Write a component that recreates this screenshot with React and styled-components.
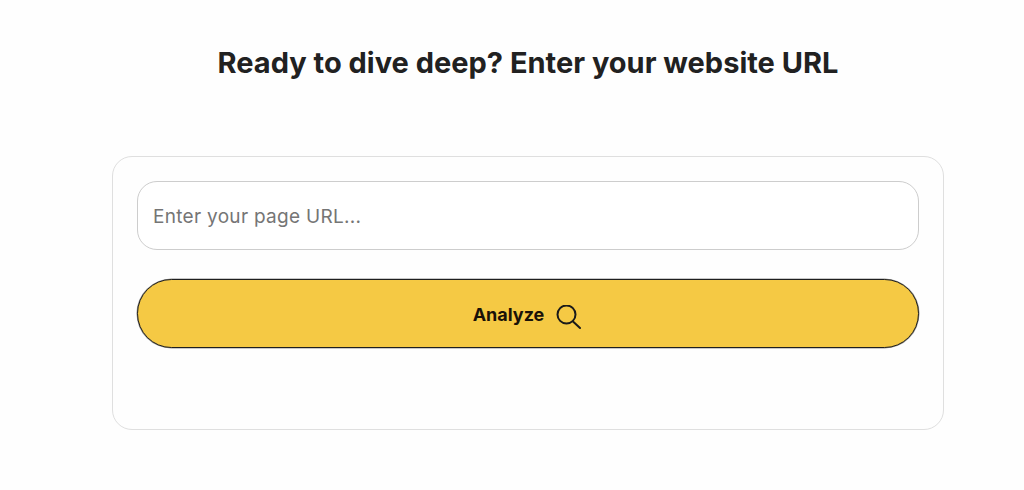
import React from "react";
import styled, { createGlobalStyle } from "styled-components";

const Global = createGlobalStyle`
  * { box-sizing: border-box; }
  html, body { margin: 0; padding: 0; background: #fefefe; }
  body { font-family: Inter, "Liberation Sans", sans-serif; overflow: hidden; }
`;

export default function App() {
  return (
    <Page>
      <Global />
      <Title>Ready to dive deep? Enter your website URL</Title>
      <Card>
        <UrlInput type="text" placeholder="Enter your page URL..." />
        <AnalyzeButton type="button">
          Analyze
          <SearchIcon viewBox="0 0 25 25">
            <circle cx="10.5" cy="9.5" r="9" />
            <path d="M17 16.5l7 6.5" />
          </SearchIcon>
        </AnalyzeButton>
      </Card>
    </Page>
  );
}

const Page = styled.main`
  width: 1024px;
  height: 490px;
  padding: 45px 80px 0 112px;
  display: flex;
  flex-direction: column;
`;

const Title = styled.h1`
  margin: 0 0 75px;
  height: 36px;
  font-size: 29px;
  line-height: 36px;
  font-weight: 700;
  color: #212121;
  text-align: center;
  white-space: nowrap;
`;

const Card = styled.section`
  height: 274px;
  padding: 24px 24px 0;
  border: 1px solid #dfdfdf;
  border-radius: 20px;
  display: flex;
  flex-direction: column;
  gap: 29px;
`;

const UrlInput = styled.input`
  width: 100%;
  height: 69px;
  padding: 2px 15px 0;
  border: 1px solid #cdcdcd;
  border-radius: 20px;
  background: #fff;
  font-family: inherit;
  font-size: 19px;
  letter-spacing: 0.3px;
  color: #212121;
  outline: none;

  &::placeholder {
    color: #757575;
    opacity: 1;
  }
`;

const AnalyzeButton = styled.button`
  width: 100%;
  height: 69px;
  padding: 2px 2px 0 0;
  border: 1px solid #1f1f1f;
  border-radius: 35px;
  background: #f5c944;
  box-shadow: 0 0 0 0.5px rgba(40, 40, 40, 0.5);
  color: #1a1208;
  font-family: inherit;
  font-size: 18px;
  font-weight: 700;
  display: flex;
  align-items: center;
  justify-content: center;
  gap: 12px;
`;

const SearchIcon = styled.svg`
  width: 25px;
  height: 25px;
  margin-top: 6px;
  fill: none;
  stroke: #1a1a1a;
  stroke-width: 2;
  stroke-linecap: round;
`;
